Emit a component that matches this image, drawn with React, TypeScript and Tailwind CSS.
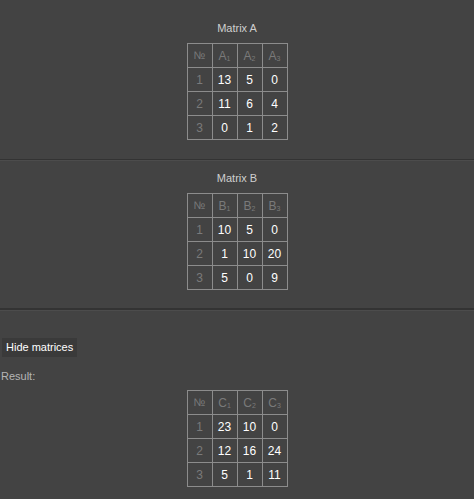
import React from 'react';

type MatrixProps = {
  letter: string;
  data: number[][];
};

const Sub: React.FC<{ n: number }> = ({ n }) => (
  <sub className="text-[7px] relative top-[1px]">{n}</sub>
);

const MatrixTable: React.FC<MatrixProps> = ({ letter, data }) => (
  <table className="border-collapse border border-[#8c8c8c] mx-auto text-[12px]">
    <thead>
      <tr>
        <th className="w-[25px] h-[24px] border border-[#8c8c8c] font-normal text-[#7a7a7a] text-[11px]">№</th>
        {[1, 2, 3].map((n) => (
          <th key={n} className="w-[25px] h-[24px] border border-[#8c8c8c] font-normal text-[#7a7a7a]">
            {letter}
            <Sub n={n} />
          </th>
        ))}
      </tr>
    </thead>
    <tbody>
      {data.map((row, i) => (
        <tr key={i}>
          <td className="w-[25px] h-[24px] border border-[#8c8c8c] text-center text-[#7a7a7a]">{i + 1}</td>
          {row.map((v, j) => (
            <td key={j} className="w-[25px] h-[24px] border border-[#8c8c8c] text-center text-white">
              {v}
            </td>
          ))}
        </tr>
      ))}
    </tbody>
  </table>
);

export default function App() {
  return (
    <div className="w-[474px] h-[499px] bg-[#434343] overflow-hidden" style={{ fontFamily: '"Liberation Sans", Arial, sans-serif' }}>
      {/* Matrix A */}
      <div className="pt-[21px] pb-[19px]">
        <div className="text-center text-[11px] text-[#cfcfcf] leading-[14px] mb-[8px]">Matrix A</div>
        <MatrixTable letter="A" data={[[13, 5, 0], [11, 6, 4], [0, 1, 2]]} />
      </div>
      <div className="h-[2px] border-t border-[#333333] border-b border-b-[#4c4c4c]" />

      {/* Matrix B */}
      <div className="pt-[10px] pb-[18px]">
        <div className="text-center text-[11px] text-[#cfcfcf] leading-[14px] mb-[8px]">Matrix B</div>
        <MatrixTable letter="B" data={[[10, 5, 0], [1, 10, 20], [5, 0, 9]]} />
      </div>
      <div className="h-[3px] border-t-2 border-[#333333] border-b border-b-[#4c4c4c]" />

      <div className="pt-[23px] px-[2px]">
        <button className="bg-[#3a3a3a] text-white text-[11px] px-[4px] h-[19px] leading-[19px]">Hide matrices</button>
      </div>
      <div className="mt-[11px] px-[1px] text-[11px] text-[#b5b5b5] leading-[14px]">Result:</div>
      <div className="mt-[7px]">
        <MatrixTable letter="C" data={[[23, 10, 0], [12, 16, 24], [5, 1, 11]]} />
      </div>
    </div>
  );
}
